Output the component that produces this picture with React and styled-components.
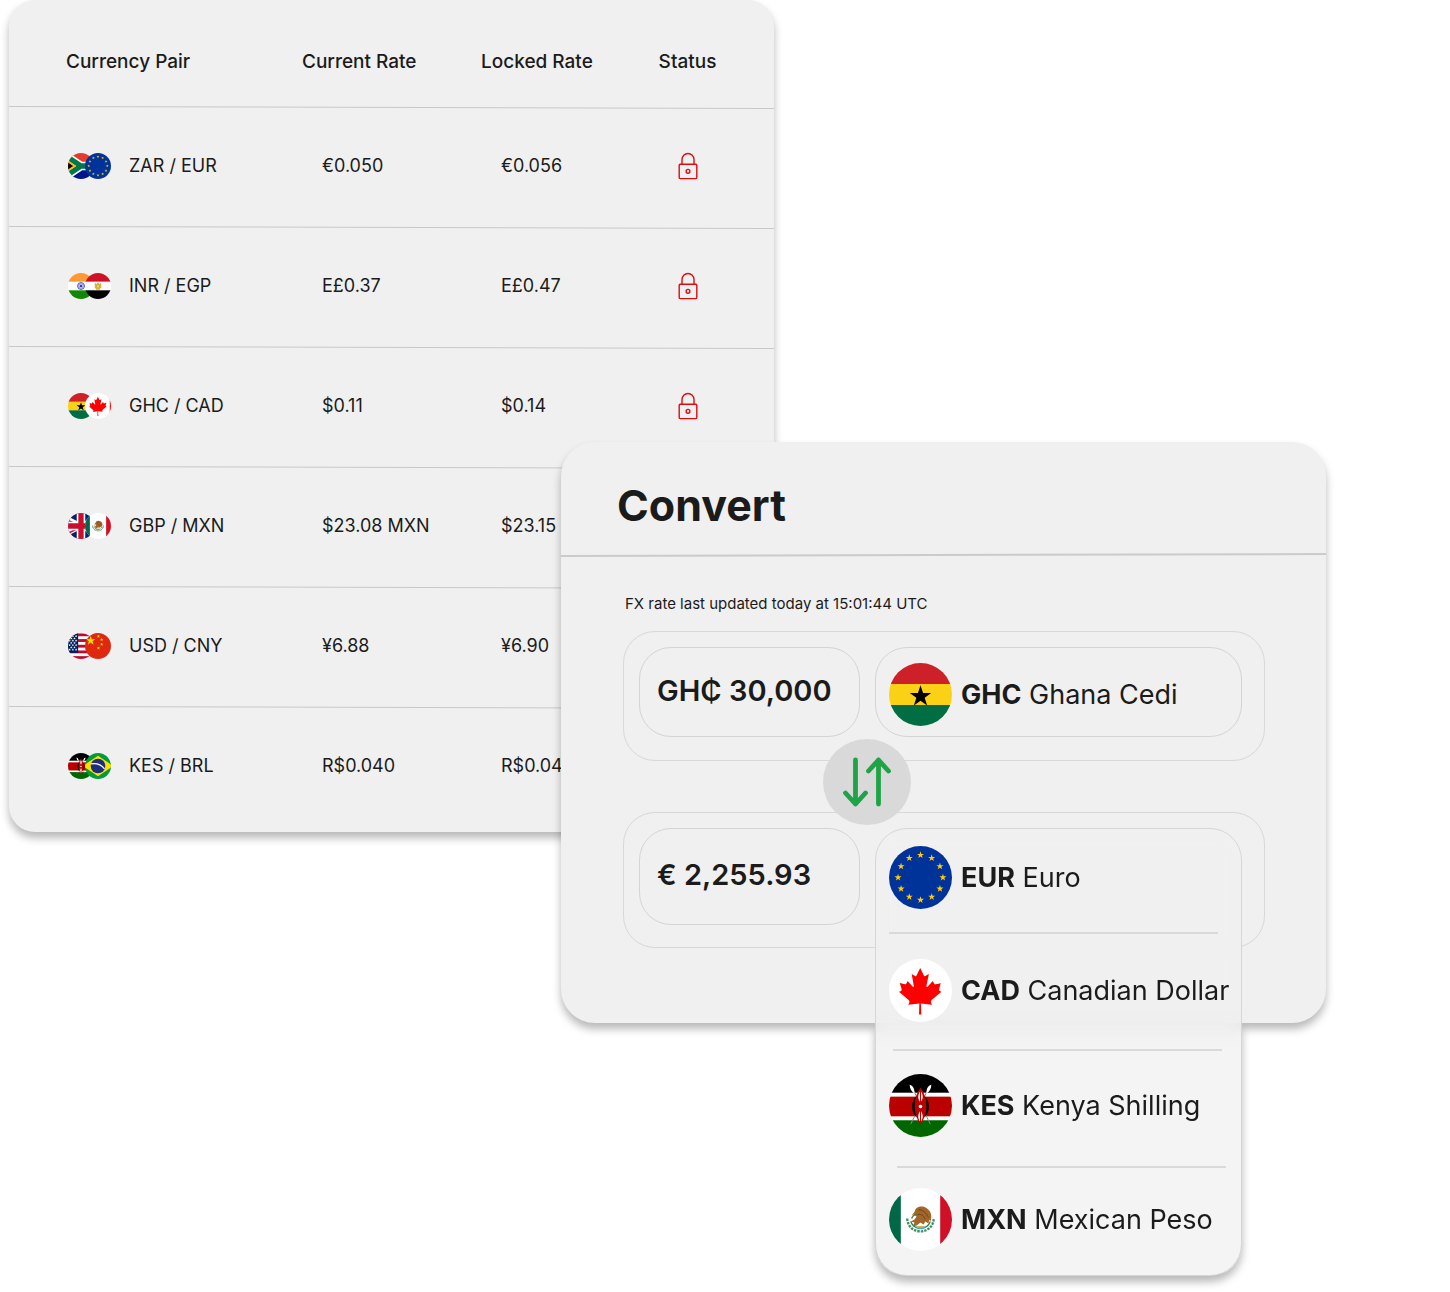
import React from "react";
import styled, { createGlobalStyle } from "styled-components";

const GlobalStyle = createGlobalStyle`
  *, *::before, *::after { box-sizing: border-box; }
  body {
    margin: 0;
    background: #ffffff;
    color: #1b1b1b;
    font-family: Inter, "Open Sans", "Liberation Sans", sans-serif;
  }
  button, input { font: inherit; color: inherit; }
`;

/* ---------- page ---------- */

const Stage = styled.main`
  display: grid;
  grid-template-columns: 552fr 213fr 552fr;
  align-items: start;
  min-width: 1200px;
  padding: 0 124px 269px 9px;
`;

const Panel = styled.section`
  grid-row: 1;
  background: #f0f0f0;
  box-shadow: 0 6px 8px rgba(0, 0, 0, 0.28);
`;

const RatesPanel = styled(Panel)`
  grid-column: 1 / 3;
  border-radius: 26px;
  padding-bottom: 4px;
`;

const ConvertPanel = styled(Panel)`
  grid-column: 2 / 4;
  position: relative;
  margin-top: 442px;
  padding-bottom: 75px;
  border-radius: 34px;
`;

/* ---------- rates table ---------- */

const Table = styled.table`
  display: block;
  width: 100%;
`;

const TableHead = styled.thead`
  display: block;
`;

const TableBody = styled.tbody`
  display: block;
`;

const TableRow = styled.tr`
  position: relative;
  display: grid;
  grid-template-columns: 236fr 179fr 176fr 61fr;
  align-items: center;
  height: ${(p) => (p.$head ? 108 : 120)}px;
  padding: ${(p) => (p.$head ? "15px 56px 0 57px" : "0 56px 4px 57px")};

  &::after {
    content: "";
    position: absolute;
    inset: auto 0 0 0;
    height: 1px;
    background: #c8c8c8;
    transform: rotate(0.16deg);
  }
  ${TableBody} &:last-child::after { content: none; }
`;

const HeadCell = styled.th`
  padding: 0;
  text-align: ${(p) => p.$align || "left"};
  font-size: 19px;
  font-weight: 500;
  line-height: 24px;
  white-space: nowrap;
`;

const RateCell = styled.td`
  padding: 0 0 0 20px;
  font-size: 18px;
  line-height: 24px;
  white-space: nowrap;
`;

const StatusCell = styled.td`
  display: flex;
  justify-content: center;
  padding: 0;
`;

const PairCell = styled.th`
  display: flex;
  align-items: center;
  gap: 18px;
  padding: 0 0 0 2px;
  font-size: 18px;
  font-weight: 400;
  line-height: 24px;
  white-space: nowrap;
`;

const FlagPair = styled.span`
  display: flex;
  svg + svg { margin-left: -9px; }
`;

/* ---------- convert card ---------- */

const CardHeader = styled.header`
  position: relative;
  padding: 37px 56px 25px;

  &::after {
    content: "";
    position: absolute;
    inset: auto 0 0 0;
    height: 2px;
    background: #cbcbcb;
    transform: rotate(-0.15deg);
  }
`;

const Title = styled.h1`
  margin: 0;
  font-size: 43px;
  font-weight: 700;
  line-height: 52px;
`;

const CardBody = styled.div`
  padding: 38px 61px 0 62px;
`;

const Updated = styled.p`
  margin: 0 0 17px 2px;
  font-size: 15px;
  line-height: 20px;
`;

const Group = styled.div`
  display: grid;
  grid-template-columns: 221fr 367fr;
  gap: 15px;
  padding: 15px 22px ${(p) => (p.$tall ? 22 : 23)}px 15px;
  border: 1px solid #d8d8d8;
  border-radius: 32px;
`;

const AmountInput = styled.input`
  width: 100%;
  min-width: 0;
  height: ${(p) => (p.$tall ? 97 : 90)}px;
  padding: 0 0 4px 17px;
  border: 1px solid #d4d4d4;
  border-radius: 32px;
  background: transparent;
  font-size: 29px;
  font-weight: 600;
`;

const CurrencyButton = styled.button`
  display: flex;
  align-items: center;
  gap: 9px;
  height: 90px;
  padding: 5px 0 0 13px;
  border: 1px solid #d4d4d4;
  border-radius: 32px;
  background: transparent;
  font-size: 27px;
  white-space: nowrap;
  cursor: pointer;
`;

const SwapRow = styled.div`
  position: relative;
  z-index: 1;
  height: 51px;
`;

const SwapButton = styled.button`
  position: absolute;
  left: 38%;
  top: 42%;
  display: grid;
  place-items: center;
  width: 88px;
  height: 86px;
  padding: 0;
  border: 0;
  border-radius: 50%;
  background: #d9d9d9;
  transform: translate(-50%, -50%);
  cursor: pointer;
`;

const MenuAnchor = styled.div`
  position: relative;
`;

const Menu = styled.ul`
  position: absolute;
  inset: 0 0 auto 0;
  margin: 0;
  padding: 0;
  list-style: none;
  border: 1px solid #d6d6d6;
  border-radius: 32px;
  background: rgba(240, 240, 240, 0.75);
  backdrop-filter: blur(10px);

  /* the shadow falls only where the menu hangs below the card */
  &::before {
    content: "";
    position: absolute;
    inset: 195px -1px -1px -1px;
    border-radius: 0 0 32px 32px;
    box-shadow: 0 6px 8px rgba(0, 0, 0, 0.28);
    clip-path: inset(0 -20px -30px -20px);
    pointer-events: none;
  }
`;

const MenuItem = styled.li`
  &:not(:last-child)::after {
    content: "";
    display: block;
    height: 2px;
    margin: 0 ${(p) => 23 - p.$shift}px 0 ${(p) => 13 + p.$shift}px;
    background: #d9d9d9;
  }
`;

const Option = styled.button`
  display: flex;
  align-items: center;
  gap: 9px;
  width: 100%;
  height: ${(p) => p.$height}px;
  padding: 0 0 ${(p) => p.$bottom}px 13px;
  border: 0;
  background: transparent;
  font-size: 27px;
  white-space: nowrap;
  cursor: pointer;
`;

const CurrencyCode = styled.strong`
  font-weight: 700;
`;

/* ---------- flags ---------- */

const star = (cx, cy, r, inner = 0.382) =>
  Array.from({ length: 10 }, (_, i) => {
    const a = (Math.PI / 5) * i - Math.PI / 2;
    const d = i % 2 ? r * inner : r;
    return `${(cx + d * Math.cos(a)).toFixed(2)},${(cy + d * Math.sin(a)).toFixed(2)}`;
  }).join(" ");

const Star = ({ x, y, r, fill }) => <polygon points={star(x, y, r)} fill={fill} />;

const Bands = ({ colors }) =>
  colors.map((c, i) => <rect key={i} y={(i * 64) / 3} width="64" height="22" fill={c} />);

const MapleLeaf = () => (
  <path
    transform="translate(-21.6 -6.8) scale(.169)"
    fill="#ff0000"
    d="m201 232-13.3 4.4 61.4 54c4.7 13.7-1.6 17.8-5.6 25l66.6-8.4-1.6 67 13.900-.3-3.100-66.600 66.700 8c-4.100-8.700-7.800-13.300-4-27.200l61.300-51-10.700-4c-8.800-6.800 3.800-32.600 5.600-48.900 0 0-35.700 12.300-38 5.800l-9.300-17.500-32.600 35.800c-3.500.9-5-.5-5.900-3.500l15-74.800-23.800 13.400q-3.200 1.300-5.200-2.200l-23-46-23.600 47.800q-2.800 2.500-5 .7L264 130.800l13.700 74.100c-1.100 3-3.700 3.800-6.700 2.200l-31.200-35.300c-4 6.500-6.800 17.100-12.200 19.500s-23.500-4.500-35.600-7c4.200 14.800 17 39.600 9 47.700"
  />
);

const FLAG_ART = {
  GHC: () => (
    <>
      <Bands colors={["#ce2029", "#fad115", "#006e42"]} />
      <Star x={32} y={34} r={11.5} fill="#000" />
    </>
  ),
  EUR: () => (
    <>
      <rect width="64" height="64" fill="#003399" />
      {Array.from({ length: 12 }, (_, i) => (
        <Star
          key={i}
          x={32 + 22.8 * Math.sin((i * Math.PI) / 6)}
          y={32 - 22.8 * Math.cos((i * Math.PI) / 6)}
          r={3.8}
          fill="#ffcc00"
        />
      ))}
    </>
  ),
  CAD: () => (
    <>
      <rect width="64" height="64" fill="#fff" />
      <MapleLeaf />
    </>
  ),
  KES: () => (
    <>
      <rect width="64" height="64" fill="#fff" />
      <rect width="64" height="19" fill="#000" />
      <rect y="23" width="64" height="20" fill="#bb0000" />
      <rect y="47" width="64" height="17" fill="#006600" />
      <path d="M24 15 42 51M40 15 22 51" stroke="#888" strokeWidth="1" />
      <path d="M21 11c4 1 5 5 5 9-3-2-5-5-5-9zM43 11c-4 1-5 5-5 9 3-2 5-5 5-9z" fill="#fff" />
      <path d="M28 22c-6 5-6 17 0 22zM36 22c6 5 6 17 0 22z" fill="#000" />
      <path d="M32 14c8 10 8 27 0 37-8-10-8-27 0-37z" fill="#bb0000" />
      <path d="M32 17c3 4 3 8 0 12-3-4-3-8 0-12zM32 37c3 4 3 8 0 12-3-4-3-8 0-12z" fill="#fff" />
      <path d="M32 15v15M32 35v15" stroke="#bb0000" strokeWidth="1" />
      <circle cx="32" cy="33" r="1.8" fill="#fff" />
    </>
  ),
  MXN: () => (
    <>
      <rect width="64" height="64" fill="#fff" />
      <rect width="12" height="64" fill="#006847" />
      <rect x="52" width="12" height="64" fill="#ce1126" />
      <path d="M18.500 31c.5 8 6 13 13.500 13s13-5 13.500-13" fill="none" stroke="#3f8f63" strokeWidth="2.4" strokeDasharray="2.500 1" />
      <path d="M22 34c2 5 6 7 10 7s8-2 10-7" fill="none" stroke="#2b7a54" strokeWidth="1.3" />
      <path d="M27 39h10l-2 3h-6z" fill="#4aa8d8" />
      <path d="M29 39.500h6" stroke="#e0b12c" strokeWidth="1.6" />
      <path d="M26 24c1-5 8-7 13-3 4 3 5 8 3 13l-1-2-1 4-3-2-2 3-3-2-4 3-4 1 2-4-4-1 4-2 2-3-3-2-2 1z" fill="#a2652a" />
      <path d="M30 22c4 0 8 3 10 8M29 27c4-1 6 1 8 5" fill="none" stroke="#6e4319" strokeWidth="1" />
      <path d="M23 31c1-3 3-4 5-4" fill="none" stroke="#557a3a" strokeWidth="1.4" />
    </>
  ),
  ZAR: () => (
    <>
      <rect width="64" height="32" fill="#e03c31" />
      <rect y="32" width="64" height="32" fill="#001489" />
      <path d="M-16 0 32 32-16 64M32 32h40" fill="none" stroke="#fff" strokeWidth="21" />
      <path d="M-16 0 32 32-16 64M32 32h40" fill="none" stroke="#007749" strokeWidth="13" />
      <path d="M-16 7.700 20.500 32-16 56.300z" fill="#ffb81c" />
      <path d="M-16 13 12.500 32-16 51z" fill="#000" />
    </>
  ),
  INR: () => (
    <>
      <Bands colors={["#ff9933", "#ffffff", "#138808"]} />
      <circle cx="32" cy="32" r="8.5" fill="#d5d5f2" stroke="#3b3bab" strokeWidth="2" />
      <path d="M32 24v16M24 32h16M26.300 26.300l11.400 11.400M37.700 26.300 26.300 37.700" stroke="#5555bb" strokeWidth="1" />
      <circle cx="32" cy="32" r="2.5" fill="#20208c" />
    </>
  ),
  EGP: () => (
    <>
      <Bands colors={["#ce1126", "#ffffff", "#000000"]} />
      <path d="M24 24l5 3 1-3h4l1 3 5-3v13l-3 1v3H27v-3l-3-1z" fill="#d9b23a" />
      <path d="M30 29h4v7h-4z" fill="#fff3cd" stroke="#b18a1c" strokeWidth="1" />
    </>
  ),
  CADWide: () => (
    <>
      <rect width="64" height="64" fill="#fff" />
      <rect x="61" width="3" height="64" fill="#ff0000" />
      <MapleLeaf />
    </>
  ),
  GBP: () => (
    <>
      <rect width="64" height="64" fill="#012169" />
      <path d="M-32 0 96 64M-32 64 96 0" stroke="#fff" strokeWidth="12.8" />
      <path d="M-32 2 32 34M-32 66 32 34M32 30 96-2M32 30l64 32" stroke="#c8102e" strokeWidth="4" />
      <path d="M32 0v64M0 32h64" stroke="#fff" strokeWidth="21" />
      <path d="M32 0v64M0 32h64" stroke="#c8102e" strokeWidth="13" />
    </>
  ),
  USD: () => (
    <>
      <rect width="64" height="64" fill="#fff" />
      {Array.from({ length: 5 }, (_, i) => (
        <rect key={i} y={i * 14 + 1} width="64" height="7" fill="#bf0a30" />
      ))}
      <rect width="25" height="49" fill="#00205b" />
      {[8, 19, 30, 41].map((y) =>
        [4, 12, 20].map((x) => <Star key={`${x}-${y}`} x={x} y={y} r={3.4} fill="#fff" />)
      )}
      {[13.5, 24.5, 35.5].map((y) =>
        [8, 16].map((x) => <Star key={`${x}-${y}`} x={x} y={y} r={3.4} fill="#fff" />)
      )}
    </>
  ),
  CNY: () => (
    <>
      <rect width="64" height="64" fill="#de2910" />
      <Star x={14} y={19} r={12} fill="#ffde00" />
      <Star x={33} y={8} r={4.5} fill="#ffde00" />
      <Star x={41} y={16} r={4.5} fill="#ffde00" />
      <Star x={41} y={28} r={4.5} fill="#ffde00" />
      <Star x={33} y={37} r={4.5} fill="#ffde00" />
    </>
  ),
  BRL: () => (
    <>
      <rect width="64" height="64" fill="#009b3a" />
      <path d="M-6 32 32 7l38 25-38 25z" fill="#fedf00" />
      <circle cx="32" cy="32" r="18" fill="#1d2f7c" />
      <path d="M15 27c12-2 25 2 33 12" fill="none" stroke="#fff" strokeWidth="3" />
    </>
  ),
};

function Flag({ code, size }) {
  const id = React.useId();
  const Art = FLAG_ART[code];
  return (
    <svg width={size} height={size} viewBox="0 0 64 64" aria-hidden="true">
      <clipPath id={id}>
        <circle cx="32" cy="32" r="32" />
      </clipPath>
      <g clipPath={`url(#${id})`}>
        <Art />
      </g>
    </svg>
  );
}

/* ---------- icons ---------- */

const LockIcon = () => (
  <svg width="20" height="28" viewBox="0 0 20 28" fill="none" stroke="#dc0d12" strokeWidth="1.4" aria-hidden="true">
    <rect x="1.2" y="12.2" width="17.6" height="14.4" rx="1" />
    <path d="M4 12V7.500a6 6 0 0 1 12 0V12" />
    <circle cx="10" cy="19.3" r="1.9" />
  </svg>
);

const SwapIcon = () => (
  <svg width="48" height="50" viewBox="0 0 48 50" fill="none" stroke="#1ea446" strokeWidth="4.8" strokeLinecap="round" strokeLinejoin="round" aria-hidden="true">
    <path d="M12.500 3v44M2.500 36l10 11 10-11" />
    <path d="M35.500 47V3M25.500 14l10-11 10 11" />
  </svg>
);

/* ---------- data ---------- */

const RATES = [
  { flags: ["ZAR", "EUR"], pair: "ZAR / EUR", current: "€0.050", locked: "€0.056" },
  { flags: ["INR", "EGP"], pair: "INR / EGP", current: "E£0.37", locked: "E£0.47" },
  { flags: ["GHC", "CADWide"], pair: "GHC / CAD", current: "$0.11", locked: "$0.14" },
  { flags: ["GBP", "MXN"], pair: "GBP / MXN", current: "$23.08 MXN", locked: "$23.15" },
  { flags: ["USD", "CNY"], pair: "USD / CNY", current: "¥6.88", locked: "¥6.90" },
  { flags: ["KES", "BRL"], pair: "KES / BRL", current: "R$0.040", locked: "R$0.04" },
];

const OPTIONS = [
  { code: "EUR", name: "Euro", height: 103, bottom: 7 },
  { code: "CAD", name: "Canadian Dollar", height: 115, bottom: 2 },
  { code: "KES", name: "Kenya Shilling", height: 115, bottom: 6 },
  { code: "MXN", name: "Mexican Peso", height: 107, bottom: 4 },
];

const CurrencyName = ({ code, name }) => (
  <span>
    <CurrencyCode>{code}</CurrencyCode> {name}
  </span>
);

export default function App() {
  return (
    <>
      <GlobalStyle />
      <Stage>
        <RatesPanel>
          <Table>
            <TableHead>
              <TableRow $head>
                <HeadCell scope="col">Currency Pair</HeadCell>
                <HeadCell scope="col">Current Rate</HeadCell>
                <HeadCell scope="col">Locked Rate</HeadCell>
                <HeadCell scope="col" $align="center">Status</HeadCell>
              </TableRow>
            </TableHead>
            <TableBody>
              {RATES.map((r) => (
                <TableRow key={r.pair}>
                  <PairCell scope="row">
                    <FlagPair>
                      {r.flags.map((f) => (
                        <Flag key={f} code={f} size={26} />
                      ))}
                    </FlagPair>
                    {r.pair}
                  </PairCell>
                  <RateCell>{r.current}</RateCell>
                  <RateCell>{r.locked}</RateCell>
                  <StatusCell>
                    <LockIcon />
                  </StatusCell>
                </TableRow>
              ))}
            </TableBody>
          </Table>
        </RatesPanel>

        <ConvertPanel>
          <CardHeader>
            <Title>Convert</Title>
          </CardHeader>
          <CardBody>
            <Updated>FX rate last updated today at 15:01:44 UTC</Updated>
            <Group>
              <AmountInput aria-label="Amount to convert" defaultValue="GH₵ 30,000" />
              <CurrencyButton type="button" aria-haspopup="true">
                <Flag code="GHC" size={63} />
                <CurrencyName code="GHC" name="Ghana Cedi" />
              </CurrencyButton>
            </Group>
            <SwapRow>
              <SwapButton type="button" aria-label="Swap currencies">
                <SwapIcon />
              </SwapButton>
            </SwapRow>
            <Group $tall>
              <AmountInput $tall aria-label="Converted amount" defaultValue="€ 2,255.93" />
              <MenuAnchor>
                <Menu>
                  {OPTIONS.map((o, i) => (
                    <MenuItem key={o.code} $shift={i * 4}>
                      <Option type="button" $height={o.height} $bottom={o.bottom}>
                        <Flag code={o.code} size={63} />
                        <CurrencyName code={o.code} name={o.name} />
                      </Option>
                    </MenuItem>
                  ))}
                </Menu>
              </MenuAnchor>
            </Group>
          </CardBody>
        </ConvertPanel>
      </Stage>
    </>
  );
}
